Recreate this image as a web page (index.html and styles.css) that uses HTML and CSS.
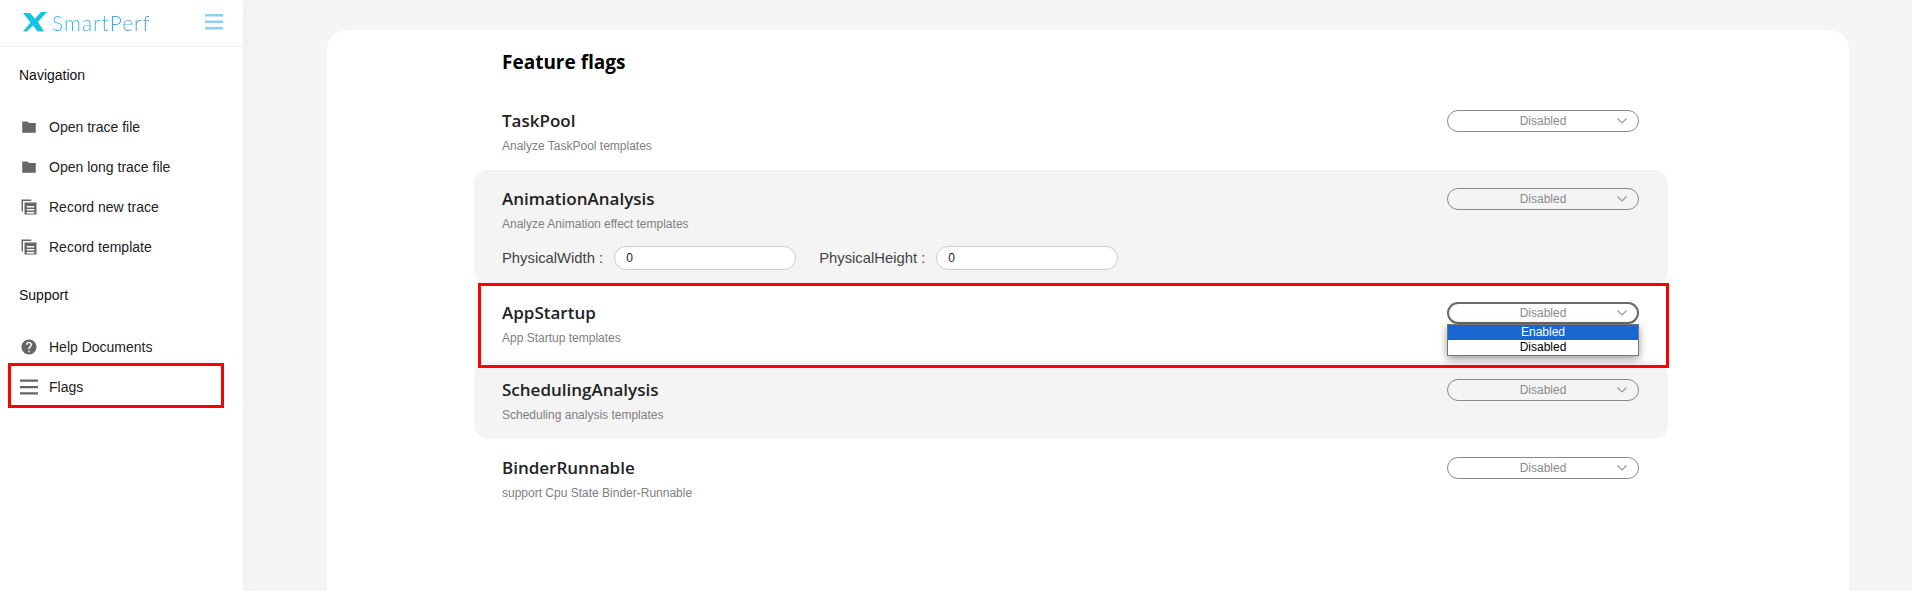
FILE: index.html
```html
<!DOCTYPE html>
<html lang="en">
<head>
<meta charset="utf-8">
<title>Feature flags</title>
<link rel="stylesheet" href="styles.css">
</head>
<body>
<div class="app">
  <aside class="sidebar">
    <header class="brand">
      <svg class="brand-x" viewBox="0 0 24 20" aria-hidden="true">
        <path fill="#17c4e6" d="M0 1h7l5 5.500L18 0h6L15 10l6 9.500h-6.500L10 13.500 4 19.500H0l7.500-9z"/>
      </svg>
      <span class="brand-name">SmartPerf</span>
      <svg class="brand-menu" viewBox="0 0 18 16" aria-hidden="true">
        <path d="M0 0h18v2.500H0zM0 6.500h18V9H0zM0 13h18v2.500H0z"/>
      </svg>
    </header>
    <nav>
      <h2 class="nav-title">Navigation</h2>
      <a class="nav-item"><svg class="nav-icon" viewBox="0 0 24 24"><path d="M3 4.500h7l2 2h9v13H3z"/></svg>Open trace file</a>
      <a class="nav-item"><svg class="nav-icon" viewBox="0 0 24 24"><path d="M3 4.500h7l2 2h9v13H3z"/></svg>Open long trace file</a>
      <a class="nav-item"><svg class="nav-icon" viewBox="0 0 24 24"><path d="M2 2h13v2H4v14H2z"/><path fill-rule="evenodd" d="M6 6h16v16H6zM9 10.500v2h10v-2zM9 14.500v2h10v-2zM9 18.500v2h10v-2z"/></svg>Record new trace</a>
      <a class="nav-item"><svg class="nav-icon" viewBox="0 0 24 24"><path d="M2 2h13v2H4v14H2z"/><path fill-rule="evenodd" d="M6 6h16v16H6zM9 10.500v2h10v-2zM9 14.500v2h10v-2zM9 18.500v2h10v-2z"/></svg>Record template</a>
      <h2 class="nav-title">Support</h2>
      <a class="nav-item"><svg class="nav-icon" viewBox="0 0 24 24"><path d="M12 2C6.480 2 2 6.480 2 12s4.480 10 10 10 10-4.480 10-10S17.520 2 12 2zm1 17h-2v-2h2v2zm2.070-7.750l-.9.92C13.450 12.900 13 13.500 13 15h-2v-.5c0-1.100.45-2.100 1.170-2.830l1.240-1.260c.37-.36.59-.86.59-1.410 0-1.100-.9-2-2-2s-2 .9-2 2H8c0-2.210 1.790-4 4-4s4 1.790 4 4c0 .88-.36 1.680-.93 2.250z"/></svg>Help Documents</a>
      <a class="nav-item"><svg class="nav-icon" viewBox="0 0 24 24"><path d="M0 2h24v3H0zM0 10.500h24v3H0zM0 19h24v3H0z"/></svg>Flags<span class="mark mark-nav"></span></a>
    </nav>
  </aside>
  <main class="main">
    <section class="card">
      <h1 class="page-title">Feature flags</h1>
      <div class="flag">
        <div class="flag-head">
          <div class="flag-name">TaskPool</div>
          <div class="select"><span>Disabled</span><svg class="chev" viewBox="0 0 10 6"><path d="M.5.500L5 5 9.500.500"/></svg></div>
        </div>
        <div class="flag-desc">Analyze TaskPool templates</div>
      </div>
      <div class="flag shaded">
        <div class="flag-head">
          <div class="flag-name">AnimationAnalysis</div>
          <div class="select"><span>Disabled</span><svg class="chev" viewBox="0 0 10 6"><path d="M.5.500L5 5 9.500.500"/></svg></div>
        </div>
        <div class="flag-desc">Analyze Animation effect templates</div>
        <div class="flag-fields">
          <label class="field">PhysicalWidth :<input class="field-input" type="text" value="0"></label>
          <label class="field">PhysicalHeight :<input class="field-input" type="text" value="0"></label>
        </div>
      </div>
      <div class="flag flag-open">
        <div class="flag-head">
          <div class="flag-name">AppStartup</div>
          <div class="select open"><span>Disabled</span><svg class="chev" viewBox="0 0 10 6"><path d="M.5.500L5 5 9.500.500"/></svg>
            <ul class="menu">
              <li class="menu-item active">Enabled</li>
              <li class="menu-item">Disabled</li>
            </ul>
          </div>
        </div>
        <div class="flag-desc">App Startup templates</div>
        <span class="mark mark-row"></span>
      </div>
      <div class="flag shaded">
        <div class="flag-head">
          <div class="flag-name">SchedulingAnalysis</div>
          <div class="select"><span>Disabled</span><svg class="chev" viewBox="0 0 10 6"><path d="M.5.500L5 5 9.500.500"/></svg></div>
        </div>
        <div class="flag-desc">Scheduling analysis templates</div>
      </div>
      <div class="flag">
        <div class="flag-head">
          <div class="flag-name">BinderRunnable</div>
          <div class="select"><span>Disabled</span><svg class="chev" viewBox="0 0 10 6"><path d="M.5.500L5 5 9.500.500"/></svg></div>
        </div>
        <div class="flag-desc">support Cpu State Binder-Runnable</div>
      </div>
    </section>
  </main>
</div>
</body>
</html>
```
FILE: styles.css
```css
* { box-sizing: border-box; }
html, body { margin: 0; height: 100%; }
body { font-family: "Liberation Sans", Arial, sans-serif; background: #f5f5f5; overflow: hidden; }
.app { display: flex; height: 100vh; }

.sidebar { position: relative; width: 243px; flex: none; background: #fff; box-shadow: 0 0 20px rgba(0,0,0,.04); }
.brand { display: flex; align-items: center; height: 47px; border-bottom: 1px solid #efefef; padding: 0 20px 2px 23px; }
.brand-x { width: 24px; height: 20px; flex: none; }
.brand-name { margin-left: 5px; font-family: "Lato", sans-serif; font-weight: 300; font-size: 21px; letter-spacing: 1px; color: transparent; background: linear-gradient(90deg, #2fc0ee, #4a94e2); -webkit-background-clip: text; background-clip: text; }
.brand-menu { width: 18px; height: 16px; margin-left: auto; fill: #90cff4; }

.nav-title { margin: 18px 0 22px 19px; font-size: 14px; line-height: 20px; font-weight: 400; color: #111; }
.nav-item { position: relative; display: flex; align-items: center; height: 40px; padding-left: 20px; font-size: 14px; color: #222; }
.nav-icon { width: 18px; height: 18px; margin-right: 11px; fill: #666; flex: none; }

.mark { position: absolute; border: 3px solid #f00; pointer-events: none; z-index: 3; }
.mark-nav { left: 8px; top: -4px; width: 216px; height: 45px; }
.mark-row { left: 4px; top: -1px; width: 1191px; height: 85px; }

.main { flex: 1; min-width: 0; padding: 30px 63px 0 84px; }
.card { height: 640px; background: #fff; border-radius: 20px; padding: 0 181px 0 147px; }
.page-title { margin: 0; padding: 18px 0 0 28px; height: 62px; font-family: "Open Sans", sans-serif; font-size: 19px; line-height: 28px; font-weight: 700; color: #000; }

.flag { position: relative; padding: 18px 29px 17px 28px; }
.flag-open { padding-bottom: 16px; }
.shaded { background: #f4f4f4; border-radius: 14px; }
.flag-head { display: flex; justify-content: space-between; align-items: center; height: 22px; }
.flag-name { margin-top: -2px; font-family: "Open Sans", sans-serif; font-size: 17px; font-weight: 600; color: #222; }
.flag-desc { margin-top: 7px; font-size: 12px; line-height: 14px; color: #808080; }
.flag-fields { display: flex; gap: 23px; margin-top: 15px; margin-bottom: -3px; }
.field { display: flex; align-items: center; gap: 11px; font-size: 14.800px; color: #444; }
.field-input { width: 182px; height: 24px; padding: 0 11px; border: 1px solid #ccc; border-radius: 12px; background: #fff; font: 12px "Liberation Sans", sans-serif; color: #222; outline: none; }

.select { position: relative; width: 192px; height: 22px; display: flex; align-items: center; justify-content: center; border: 1px solid #8a8a8a; border-radius: 11px; font-size: 12px; color: #8a8a8a; }
.select.open { border: 2px solid #6a6a6a; }
.chev { position: absolute; right: 11px; top: 7px; width: 10px; height: 6px; fill: none; stroke: #999; stroke-width: 1.200; }
.select.open .chev { right: 10px; top: 6px; }
.menu { position: absolute; left: -2px; top: 20px; width: 192px; margin: 0; padding: 0; list-style: none; background: #fff; border: 1px solid #777; box-shadow: 0 3px 8px rgba(0,0,0,.4); z-index: 2; }
.menu-item { height: 15px; line-height: 15px; text-align: center; color: #000; font-size: 12px; }
.menu-item.active { background: #1a67d2; color: #fff; }
```
